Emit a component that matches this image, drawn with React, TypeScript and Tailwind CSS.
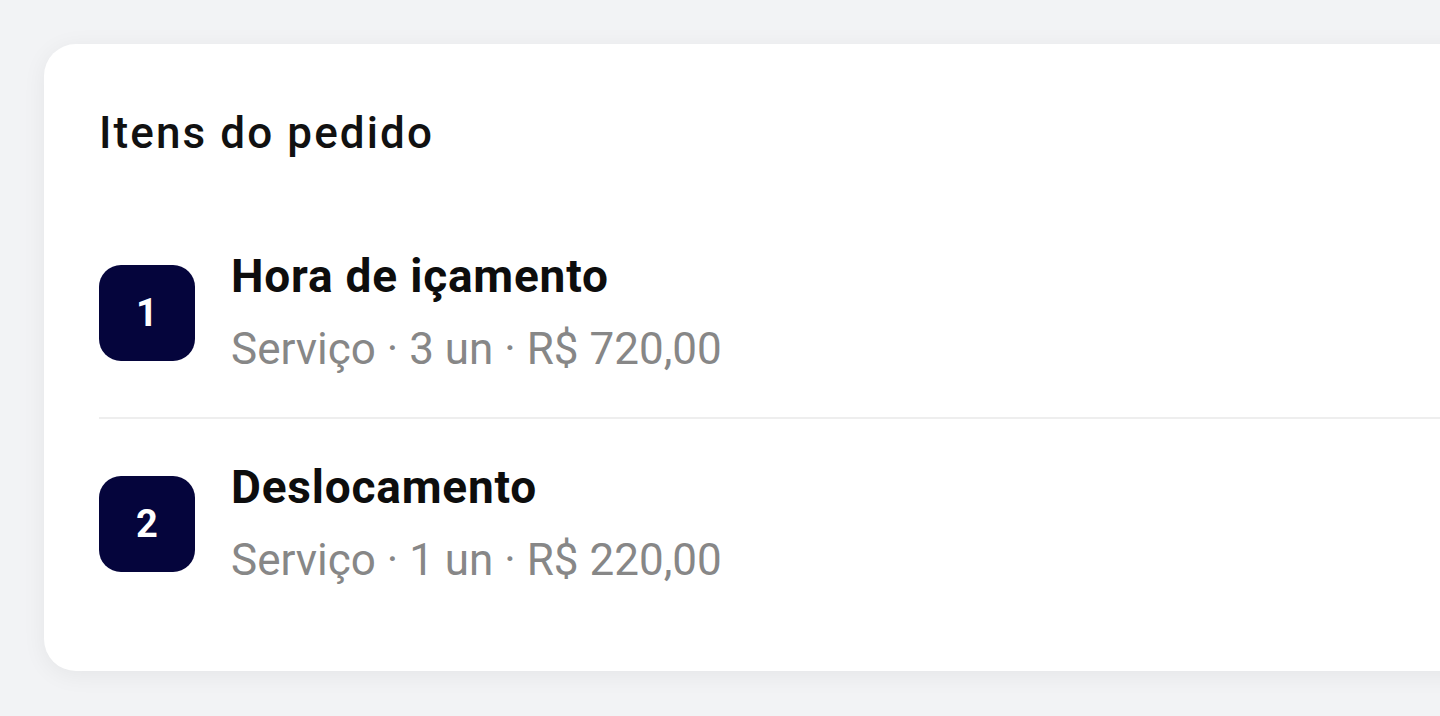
type Item = { n: number; name: string; kind: string; qty: string; price: string };

const items: Item[] = [
  { n: 1, name: "Hora de içamento", kind: "Serviço", qty: "3 un", price: "R$ 720,00" },
  { n: 2, name: "Deslocamento", kind: "Serviço", qty: "1 un", price: "R$ 220,00" },
];

function ItemRow({ item }: { item: Item }) {
  return (
    <div className="flex items-center gap-[36px] py-[42px]">
      <div className="flex h-[96px] w-[96px] shrink-0 items-center justify-center rounded-[22px] bg-[#05053c] text-[38px] font-bold leading-none text-white">
        {item.n}
      </div>
      <div className="flex flex-col">
        <div className="text-[46px] font-bold leading-[52px] tracking-[0.8px] text-[#0d0d0d]">{item.name}</div>
        <div className="mt-[21px] text-[44px] font-normal leading-[52px] text-[#878787]">
          {item.kind} · {item.qty} · {item.price}
        </div>
      </div>
    </div>
  );
}

export default function App() {
  return (
    <div
      className="h-[716px] w-[1440px] overflow-hidden bg-[#f2f3f5] pl-[44px] pt-[44px]"
      style={{ fontFamily: "Roboto, 'Noto Sans', sans-serif" }}
    >
      <div className="w-[1500px] rounded-[32px] bg-white pb-[43px] pl-[55px] pt-[63px] shadow-[0_4px_24px_rgba(0,0,0,0.06)]">
        <h2 className="text-[44px] font-medium leading-[52px] tracking-[2.1px] text-[#111111]">Itens do pedido</h2>
        <div className="mt-[49px]">
          {items.map((item, i) => (
            <div key={item.n}>
              {i > 0 && <div className="h-[2px] bg-[#eeeeee]" />}
              <ItemRow item={item} />
            </div>
          ))}
        </div>
      </div>
    </div>
  );
}
